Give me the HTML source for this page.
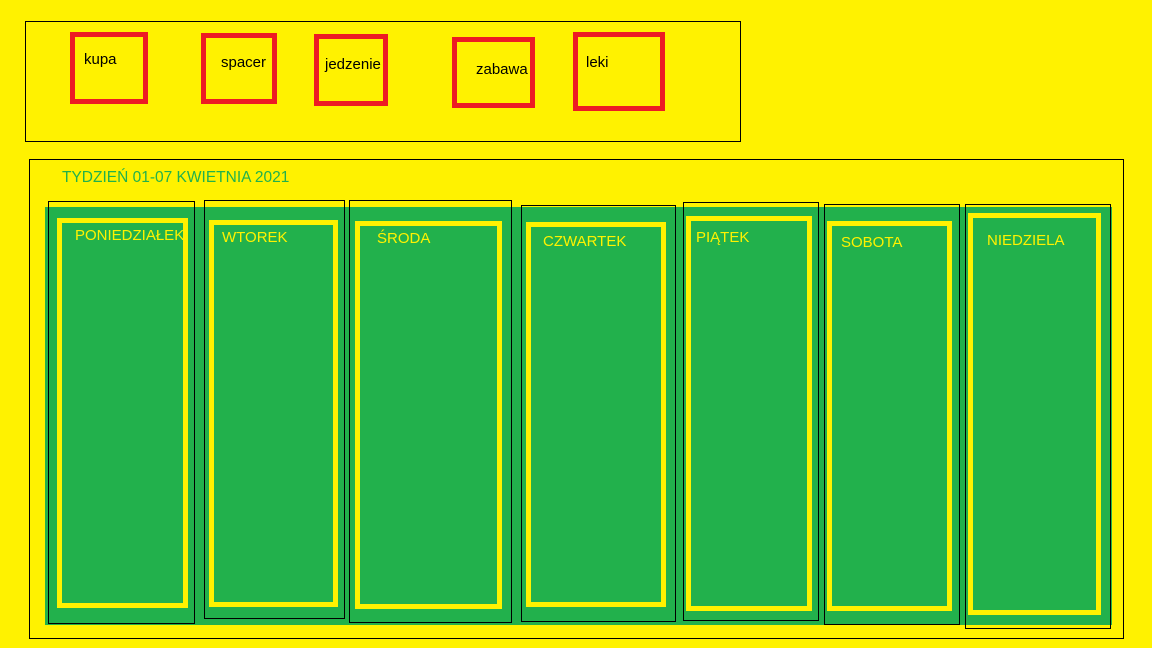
<!DOCTYPE html>
<html><head><meta charset="utf-8"><style>
body{margin:0;width:1152px;height:648px;background:#fff200;position:relative;overflow:hidden;font-family:"Liberation Sans",sans-serif}
div{position:absolute;box-sizing:border-box}
.b{border:1px solid #000}
.r{border:5px solid #ed1c24}
.y{border:5px solid #fff200}
.t{font-size:15px;color:#000;white-space:nowrap}
.d{font-size:15px;color:#fff200;white-space:nowrap}
</style></head><body>
<div class="b" style="left:25px;top:21px;width:716px;height:121px"></div>
<div class="r" style="left:70px;top:32px;width:78px;height:72px"></div>
<div class="r" style="left:201px;top:33px;width:76px;height:71px"></div>
<div class="r" style="left:314px;top:34px;width:74px;height:72px"></div>
<div class="r" style="left:452px;top:37px;width:83px;height:71px"></div>
<div class="r" style="left:573px;top:32px;width:92px;height:79px"></div>
<div class="t" style="left:84px;top:51px">kupa</div>
<div class="t" style="left:221px;top:54px">spacer</div>
<div class="t" style="left:325px;top:56px">jedzenie</div>
<div class="t" style="left:476px;top:61px">zabawa</div>
<div class="t" style="left:586px;top:54px">leki</div>

<div class="b" style="left:29px;top:159px;width:1095px;height:480px"></div>
<div style="left:62px;top:169px;font-size:15.5px;color:#22b14c;white-space:nowrap">TYDZIEŃ 01-07 KWIETNIA 2021</div>
<div style="left:45px;top:207px;width:1067px;height:418px;background:#22b14c"></div>

<div class="b" style="left:48px;top:201px;width:147px;height:423px"></div>
<div class="y" style="left:57px;top:218px;width:131px;height:390px"></div>
<div class="b" style="left:204px;top:200px;width:141px;height:419px"></div>
<div class="y" style="left:209px;top:220px;width:129px;height:387px"></div>
<div class="b" style="left:349px;top:200px;width:163px;height:423px"></div>
<div class="y" style="left:355px;top:221px;width:147px;height:388px"></div>
<div class="b" style="left:521px;top:205px;width:155px;height:417px"></div>
<div class="y" style="left:526px;top:222px;width:140px;height:385px"></div>
<div class="b" style="left:683px;top:202px;width:136px;height:419px"></div>
<div class="y" style="left:686px;top:216px;width:126px;height:395px"></div>
<div class="b" style="left:824px;top:204px;width:136px;height:421px"></div>
<div class="y" style="left:827px;top:221px;width:125px;height:390px"></div>
<div class="b" style="left:965px;top:204px;width:146px;height:425px"></div>
<div class="y" style="left:968px;top:213px;width:133px;height:402px"></div>

<div class="d" style="left:75px;top:227px">PONIEDZIAŁEK</div>
<div class="d" style="left:222px;top:229px">WTOREK</div>
<div class="d" style="left:377px;top:230px">ŚRODA</div>
<div class="d" style="left:543px;top:233px">CZWARTEK</div>
<div class="d" style="left:696px;top:229px">PIĄTEK</div>
<div class="d" style="left:841px;top:234px">SOBOTA</div>
<div class="d" style="left:987px;top:232px">NIEDZIELA</div>
</body></html>
